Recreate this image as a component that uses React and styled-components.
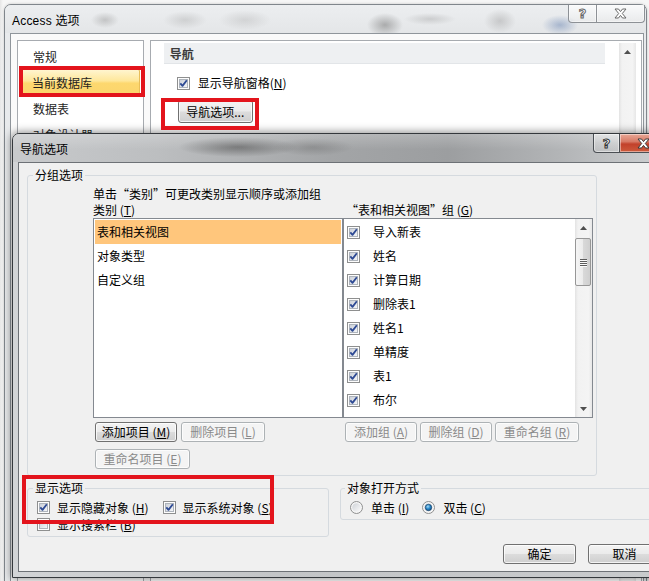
import React from "react";
import styled, { createGlobalStyle } from "styled-components";

const UI_FONT = `"Noto Sans CJK SC", "Liberation Sans", sans-serif`;

const GlobalStyle = createGlobalStyle`
  html, body {
    margin: 0;
    padding: 0;
    background: #f2f2f2;
    overflow: hidden;
  }
  body {
    font-family: ${UI_FONT};
    font-size: 12px;
    color: #000;
  }
  * {
    box-sizing: border-box;
  }
`;

const Desktop = styled.div`
  position: relative;
  width: 649px;
  height: 581px;
  overflow: hidden;
  background: linear-gradient(90deg, #e6e6e6 0, #f6f6f6 3px);
`;

/* ---------- windows ---------- */

const Window = styled.div`
  position: absolute;
  left: ${(p) => p.$x}px;
  top: ${(p) => p.$y}px;
  width: ${(p) => p.$w}px;
  height: ${(p) => (p.$h ? `${p.$h}px` : "auto")};
  display: flex;
  flex-direction: column;
  border: 1px solid ${(p) => (p.$active ? "#34383c" : "#80868c")};
  border-radius: 7px 7px 0 0;
  background: ${(p) =>
    p.$active
      ? "linear-gradient(90deg, #d2d4d6, #c3c5c7 40%, #c9cbcd)"
      : "#e8eaec"};
  box-shadow: ${(p) =>
    p.$active ? "0 0 9px 1px rgba(0,0,0,0.45)" : "0 0 3px rgba(0,0,0,0.2)"};
`;

const TitleBar = styled.div`
  height: 28px;
  flex: none;
  display: flex;
  align-items: flex-start;
  padding-left: 7px;
  border-radius: 6px 6px 0 0;
  background: ${(p) =>
    p.$active
      ? `linear-gradient(rgba(255,255,255,0.22), rgba(255,255,255,0) 55%),
         radial-gradient(60px 10px at 225px 13px, rgba(70,70,70,0.55), rgba(70,70,70,0)),
         radial-gradient(40px 9px at 300px 13px, rgba(90,90,90,0.35), rgba(90,90,90,0)),
         linear-gradient(90deg, #c8cacc 0%, #bcbec0 22%, #a3a5a7 48%, #9c9ea0 66%, #b4b6b8 84%, #d0d2d4 100%)`
      : `radial-gradient(14px 8px at 100px 15px, rgba(150,150,150,0.45), rgba(150,150,150,0)),
         radial-gradient(22px 9px at 180px 15px, rgba(160,160,160,0.35), rgba(160,160,160,0)),
         radial-gradient(26px 10px at 240px 15px, rgba(160,160,160,0.3), rgba(160,160,160,0)),
         radial-gradient(18px 12px at 380px 20px, rgba(110,110,110,0.5), rgba(110,110,110,0)),
         radial-gradient(26px 6px at 425px 14px, rgba(150,150,150,0.35), rgba(150,150,150,0)),
         radial-gradient(16px 12px at 495px 16px, rgba(150,150,150,0.4), rgba(150,150,150,0)),
         radial-gradient(18px 10px at 555px 20px, rgba(90,120,170,0.45), rgba(90,120,170,0)),
         linear-gradient(#eceef0, #e4e6e8)`};
`;

const TitleText = styled.div`
  height: 28px;
  display: flex;
  align-items: center;
  font-family: ${(p) =>
    p.$latin ? `"Liberation Sans", "Noto Sans CJK SC", sans-serif` : UI_FONT};
  font-size: 12px;
  color: #000;
  letter-spacing: ${(p) => (p.$latin ? "0.2px" : "0")};
`;

const CaptionGroup = styled.div`
  display: flex;
  margin-left: auto;
  margin-right: ${(p) => p.$right}px;
`;

const CaptionButton = styled.div`
  width: ${(p) => p.$w}px;
  height: ${(p) => p.$h}px;
  display: flex;
  align-items: center;
  justify-content: center;
  border: 1px solid ${(p) => (p.$active ? "#4b4f54" : "#8d9196")};
  border-top: none;
  border-left: ${(p) => (p.$first ? undefined : "none")};
  border-radius: ${(p) => (p.$first ? "0 0 0 4px" : "0 0 4px 0")};
  background: ${(p) =>
    p.$close
      ? "linear-gradient(#e9a897 0%, #d77a66 42%, #c2412b 56%, #cd5a3c 100%)"
      : p.$active
      ? "linear-gradient(rgba(255,255,255,0.45), rgba(255,255,255,0.15) 50%, rgba(200,200,200,0.2))"
      : "linear-gradient(rgba(255,255,255,0.7), rgba(255,255,255,0.35) 50%, rgba(235,235,235,0.5))"};
  box-shadow: inset 0 0 0 1px rgba(255, 255, 255, 0.45);
`;

const HelpGlyph = styled.span`
  font-family: "DejaVu Sans", sans-serif;
  font-weight: bold;
  font-size: 13px;
  line-height: 1;
  color: #fff;
  -webkit-text-stroke: 1px ${(p) => (p.$active ? "#333" : "#666")};
`;

const CloseIcon = ({ dark }) => (
  <svg width="13" height="11" viewBox="0 0 13 11">
    <path
      d="M1 1 H4.5 L6.5 3.6 L8.5 1 H12 L8.3 5.5 L12 10 H8.5 L6.5 7.4 L4.5 10 H1 L4.7 5.5 Z"
      fill="#fff"
      stroke={dark ? "#3a3a3a" : "#6a6a6a"}
      strokeWidth="1"
      strokeLinejoin="round"
    />
  </svg>
);

const WindowBody = styled.div`
  flex: 1;
  display: flex;
  flex-direction: column;
  padding: ${(p) => p.$pad};
`;

/* ---------- back window (Access 选项) ---------- */

const BackClient = styled.div`
  flex: 1;
  display: flex;
  align-items: flex-start;
  gap: 6px;
  padding: 6px 1px 0 6px;
  border: 1px solid #8f959b;
  border-bottom: none;
  background: #fafafa;
`;

const NavPanel = styled.div`
  width: 127px;
  height: 560px;
  padding: 2px 3px;
  border: 1px solid #a7abb0;
  background: #fff;
`;

const NavItem = styled.div`
  height: 26px;
  display: flex;
  align-items: center;
  padding-left: ${(p) => (p.$selected ? 10 : 11)}px;
  font-size: 12px;
  color: #1e1e1e;
  border: 1px solid ${(p) => (p.$selected ? "#e8bd57" : "transparent")};
  border-radius: 2px;
  background: ${(p) =>
    p.$selected
      ? "linear-gradient(#fff5cf 0%, #fee79b 45%, #fdd86f 55%, #fbd56d 100%)"
      : "transparent"};
`;

const SettingsPanel = styled.div`
  width: 493px;
  height: 560px;
  display: flex;
  padding: 2px 0 0 13px;
  border: 1px solid #a7abb0;
  background: #fff;
`;

const SettingsContent = styled.div`
  display: flex;
  flex-direction: column;
  align-items: flex-start;
`;

const SectionHeading = styled.div`
  width: 441px;
  height: 21px;
  display: flex;
  align-items: center;
  padding-left: 6px;
  background: #eef0f2;
  border-bottom: 1px solid #e2e5e8;
  font-weight: bold;
  font-size: 12px;
  color: #3b3b3b;
`;

const OptionRow = styled.label`
  display: flex;
  align-items: center;
  gap: ${(p) => p.$gap || 7}px;
  height: ${(p) => p.$h || 17}px;
  margin: ${(p) => p.$margin || "0"};
  font-size: 12px;
  line-height: 1;
  color: #000;
  white-space: nowrap;
`;

const Scrollbar = styled.div`
  width: 17px;
  flex: none;
  align-self: stretch;
  display: flex;
  flex-direction: column;
  margin-left: ${(p) => (p.$auto ? "auto" : "0")};
  margin-right: ${(p) => p.$right || 0}px;
  background: linear-gradient(90deg, #e3e3e3, #f2f2f2 18%, #f4f4f4 80%, #e7e7e7);
`;

const ScrollArrow = styled.div`
  height: 17px;
  flex: none;
  display: flex;
  align-items: center;
  justify-content: center;
`;

const ScrollThumb = styled.div`
  height: ${(p) => p.$h}px;
  margin: 2px 1px 0 0;
  display: flex;
  flex-direction: column;
  align-items: center;
  justify-content: center;
  gap: 1px;
  border: 1px solid #979797;
  border-radius: 2px;
  background: linear-gradient(90deg, #f5f5f5, #ebebeb 50%, #d9d9d9 51%, #cfcfcf);
`;

const Grip = styled.span`
  width: 7px;
  height: 1px;
  background: #5c5c5c;
  box-shadow: 0 1px 0 #fafafa;
`;

const ScrollSpacer = styled.div`
  flex: 1;
`;

const Arrow = ({ down }) => (
  <svg width="7" height="4" viewBox="0 0 7 4">
    <path d={down ? "M0 0 H7 L3.5 4 Z" : "M0 4 H7 L3.5 0 Z"} fill="#4f4f4f" />
  </svg>
);

/* ---------- front window (导航选项) ---------- */

const FrontClient = styled.div`
  flex: 1;
  display: flex;
  flex-direction: column;
  padding: 5px 5px 7px 8px;
  border: 1px solid #6d7176;
  background: #f0f0f0;
`;

const GroupBox = styled.fieldset`
  margin: ${(p) => p.$margin || "0"};
  width: ${(p) => (p.$w ? `${p.$w}px` : "auto")};
  flex: ${(p) => (p.$grow ? 1 : "none")};
  min-width: 0;
  padding: 0;
  border: 1px solid #d5dadf;
  border-radius: 3px;
`;

const GroupLegend = styled.legend`
  margin-left: ${(p) => p.$offset}px;
  padding: 0 2px;
  font-size: 12px;
  line-height: 14px;
  color: #000;
`;

const GroupInner = styled.div`
  padding: ${(p) => p.$pad};
`;

const Line = styled.div`
  height: 16px;
  display: flex;
  align-items: center;
  padding-left: ${(p) => p.$indent || 0}px;
  font-size: 12px;
  line-height: 1;
  white-space: nowrap;
`;

const Columns = styled.div`
  display: grid;
  grid-template-columns: 250px 250px;
`;

const Column = styled.div`
  display: flex;
  flex-direction: column;
`;

const ListBox = styled.div`
  height: 200px;
  display: flex;
  border: 1px solid #848990;
  background: #fff;
`;

const ListRows = styled.div`
  flex: 1;
  display: flex;
  flex-direction: column;
  padding: ${(p) => p.$pad};
`;

const ListRow = styled.div`
  height: 24px;
  flex: none;
  display: flex;
  align-items: center;
  gap: 13px;
  padding-left: ${(p) => p.$indent}px;
  font-size: 12px;
  line-height: 1;
  background: ${(p) => (p.$selected ? "#ffc67c" : "transparent")};
`;

const ButtonRow = styled.div`
  display: flex;
  gap: ${(p) => p.$gap || 4}px;
  margin: ${(p) => p.$margin};
  justify-content: ${(p) => (p.$end ? "flex-end" : "flex-start")};
`;

const Button = styled.button`
  width: ${(p) => p.$w}px;
  height: ${(p) => p.$h || 20}px;
  margin: ${(p) => p.$margin || "0"};
  padding: 0;
  display: flex;
  align-items: center;
  justify-content: center;
  font-family: ${UI_FONT};
  font-size: 12px;
  line-height: 1;
  white-space: nowrap;
  color: #000;
  border: 1px solid #707070;
  border-radius: 3px;
  background: linear-gradient(#f3f3f3 0%, #ebebeb 48%, #dcdcdc 52%, #cfcfcf 100%);
  box-shadow: inset 0 0 0 1px rgba(255, 255, 255, 0.75);

  &:disabled {
    color: #8a8a8a;
    border-color: #adb2b5;
    background: #f4f4f4;
    box-shadow: inset 0 0 0 1px #fcfcfc;
  }
`;

const BottomRow = styled.div`
  display: flex;
  align-items: flex-start;
  margin-top: 5px;
`;

const CheckLine = styled.div`
  display: flex;
  align-items: center;
  height: 17px;
`;

const Highlight = styled.div`
  position: absolute;
  left: ${(p) => p.$x}px;
  top: ${(p) => p.$y}px;
  width: ${(p) => p.$w}px;
  height: ${(p) => p.$h}px;
  border: 4px solid #e3141c;
  pointer-events: none;
  z-index: 10;
`;

const Key = ({ k }) => (
  <>
    {" "}(<u>{k}</u>)
  </>
);

const CheckBox = ({ checked }) => (
  <svg width="13" height="13" viewBox="0 0 13 13" style={{ flex: "none" }}>
    <defs>
      <linearGradient id="cb-fill" x1="0" y1="0" x2="1" y2="1">
        <stop offset="0" stopColor="#c9ced6" />
        <stop offset="1" stopColor="#f7f8fa" />
      </linearGradient>
    </defs>
    <rect x="0.5" y="0.5" width="12" height="12" fill="#fdfdfd" stroke="#8e8f8f" />
    <rect x="2.5" y="2.5" width="8" height="8" fill="url(#cb-fill)" stroke="#aeb4bc" />
    {checked && (
      <path
        d="M3.3 6.3 L5.5 8.9 L9.8 3.3"
        fill="none"
        stroke="#2e4a94"
        strokeWidth="1.8"
        strokeLinejoin="round"
      />
    )}
  </svg>
);

const Radio = ({ checked }) => (
  <svg width="13" height="13" viewBox="0 0 13 13" style={{ flex: "none" }}>
    <defs>
      <linearGradient id="rb-fill" x1="0" y1="0" x2="1" y2="1">
        <stop offset="0" stopColor="#cfd3d8" />
        <stop offset="1" stopColor="#fafafa" />
      </linearGradient>
      <radialGradient id="rb-dot" cx="0.4" cy="0.35" r="0.7">
        <stop offset="0" stopColor="#a6dcf7" />
        <stop offset="0.5" stopColor="#2a8acb" />
        <stop offset="1" stopColor="#0c4f86" />
      </radialGradient>
    </defs>
    <circle cx="6.5" cy="6.5" r="6" fill="#f6f6f6" stroke="#8e8f8f" />
    <circle cx="6.5" cy="6.5" r="4.3" fill="url(#rb-fill)" />
    {checked && (
      <circle cx="6.5" cy="6.5" r="3.2" fill="url(#rb-dot)" stroke="#173f66" strokeWidth="0.7" />
    )}
  </svg>
);

const navItems = ["常规", "当前数据库", "数据表", "对象设计器"];
const categories = ["表和相关视图", "对象类型", "自定义组"];
const groupItems = ["导入新表", "姓名", "计算日期", "删除表1", "姓名1", "单精度", "表1", "布尔"];

const App = () => {
  return (
    <Desktop>
      <GlobalStyle />

      <Window $x={4} $y={4} $w={643} $h={620}>
        <TitleBar>
          <TitleText $latin>Access 选项</TitleText>
          <CaptionGroup $right={1}>
            <CaptionButton $w={29} $h={18} $first>
              <HelpGlyph>?</HelpGlyph>
            </CaptionButton>
            <CaptionButton $w={48} $h={18}>
              <CloseIcon />
            </CaptionButton>
          </CaptionGroup>
        </TitleBar>
        <WindowBody $pad="0 2px 0 5px">
          <BackClient>
            <NavPanel>
              {navItems.map((item) => (
                <NavItem key={item} $selected={item === "当前数据库"}>
                  {item}
                </NavItem>
              ))}
            </NavPanel>
            <SettingsPanel>
              <SettingsContent>
                <SectionHeading>导航</SectionHeading>
                <OptionRow $margin="12px 0 0 13px" $gap={8} $h={14}>
                  <CheckBox checked />
                  <span>
                    显示导航窗格(<u>N</u>)
                  </span>
                </OptionRow>
                <Button $w={75} $h={23} $margin="10px 0 0 14px">
                  导航选项...
                </Button>
              </SettingsContent>
              <Scrollbar $auto $right={5}>
                <ScrollArrow>
                  <Arrow />
                </ScrollArrow>
              </Scrollbar>
            </SettingsPanel>
          </BackClient>
        </WindowBody>
      </Window>

      <Window $x={12} $y={133} $w={661} $active>
        <TitleBar $active>
          <TitleText>导航选项</TitleText>
          <CaptionGroup $right={5}>
            <CaptionButton $w={27} $h={19} $first $active>
              <HelpGlyph $active>?</HelpGlyph>
            </CaptionButton>
            <CaptionButton $w={47} $h={19} $close $active>
              <CloseIcon dark />
            </CaptionButton>
          </CaptionGroup>
        </TitleBar>
        <WindowBody $pad="0 5px 5px 5px">
          <FrontClient>
            <GroupBox $w={570}>
              <GroupLegend $offset={5}>分组选项</GroupLegend>
              <GroupInner $pad="4px 3px 6px 65px">
                <Line>单击“类别”可更改类别显示顺序或添加组</Line>
                <Columns>
                  <Column>
                    <Line>
                      类别<Key k="T" />
                    </Line>
                    <ListBox>
                      <ListRows $pad="1px">
                        {categories.map((c, i) => (
                          <ListRow key={c} $indent={2} $selected={i === 0}>
                            {c}
                          </ListRow>
                        ))}
                      </ListRows>
                    </ListBox>
                    <ButtonRow $margin="4px 0 0 2px">
                      <Button $w={82}>
                        添加项目<Key k="M" />
                      </Button>
                      <Button $w={84} disabled>
                        删除项目<Key k="L" />
                      </Button>
                    </ButtonRow>
                    <ButtonRow $margin="7px 0 0 2px">
                      <Button $w={95} disabled>
                        重命名项目<Key k="E" />
                      </Button>
                    </ButtonRow>
                  </Column>
                  <Column>
                    <Line $indent={3}>
                      “表和相关视图”组<Key k="G" />
                    </Line>
                    <ListBox>
                      <ListRows $pad="1px 0 0 3px">
                        {groupItems.map((g) => (
                          <ListRow key={g} $indent={0}>
                            <CheckBox checked />
                            {g}
                          </ListRow>
                        ))}
                      </ListRows>
                      <Scrollbar>
                        <ScrollArrow>
                          <Arrow />
                        </ScrollArrow>
                        <ScrollThumb $h={48}>
                          <Grip />
                          <Grip />
                          <Grip />
                          <Grip />
                        </ScrollThumb>
                        <ScrollSpacer />
                        <ScrollArrow>
                          <Arrow down />
                        </ScrollArrow>
                      </Scrollbar>
                    </ListBox>
                    <ButtonRow $margin="4px 0 0 2px" $gap={3}>
                      <Button $w={72} disabled>
                        添加组<Key k="A" />
                      </Button>
                      <Button $w={72} disabled>
                        删除组<Key k="D" />
                      </Button>
                      <Button $w={84} disabled>
                        重命名组<Key k="R" />
                      </Button>
                    </ButtonRow>
                  </Column>
                </Columns>
              </GroupInner>
            </GroupBox>

            <BottomRow>
              <GroupBox $w={302}>
                <GroupLegend $offset={5}>显示选项</GroupLegend>
                <GroupInner $pad="4px 4px 3px 9px">
                  <CheckLine>
                    <OptionRow $gap={7}>
                      <CheckBox checked />
                      <span>
                        显示隐藏对象<Key k="H" />
                      </span>
                    </OptionRow>
                    <OptionRow $gap={7} $margin="0 0 0 14px">
                      <CheckBox checked />
                      <span>
                        显示系统对象<Key k="S" />
                      </span>
                    </OptionRow>
                  </CheckLine>
                  <CheckLine>
                    <OptionRow $gap={7}>
                      <CheckBox />
                      <span>
                        显示搜索栏<Key k="B" />
                      </span>
                    </OptionRow>
                  </CheckLine>
                </GroupInner>
              </GroupBox>
              <GroupBox $grow $margin="0 6px 0 11px">
                <GroupLegend $offset={4}>对象打开方式</GroupLegend>
                <GroupInner $pad="4px 4px 3px 9px">
                  <CheckLine>
                    <OptionRow $gap={8}>
                      <Radio />
                      <span>
                        单击<Key k="I" />
                      </span>
                    </OptionRow>
                    <OptionRow $gap={8} $margin="0 0 0 13px">
                      <Radio checked />
                      <span>
                        双击<Key k="C" />
                      </span>
                    </OptionRow>
                  </CheckLine>
                </GroupInner>
              </GroupBox>
            </BottomRow>

            <ButtonRow $margin="7px 0 0 0" $gap={12} $end>
              <Button $w={73}>确定</Button>
              <Button $w={73}>取消</Button>
            </ButtonRow>
          </FrontClient>
        </WindowBody>
      </Window>

      <Highlight $x={19} $y={66} $w={126} $h={31} />
      <Highlight $x={161} $y={98} $w={98} $h={32} />
      <Highlight $x={22} $y={475} $w={252} $h={49} />
    </Desktop>
  );
};

export default App;
